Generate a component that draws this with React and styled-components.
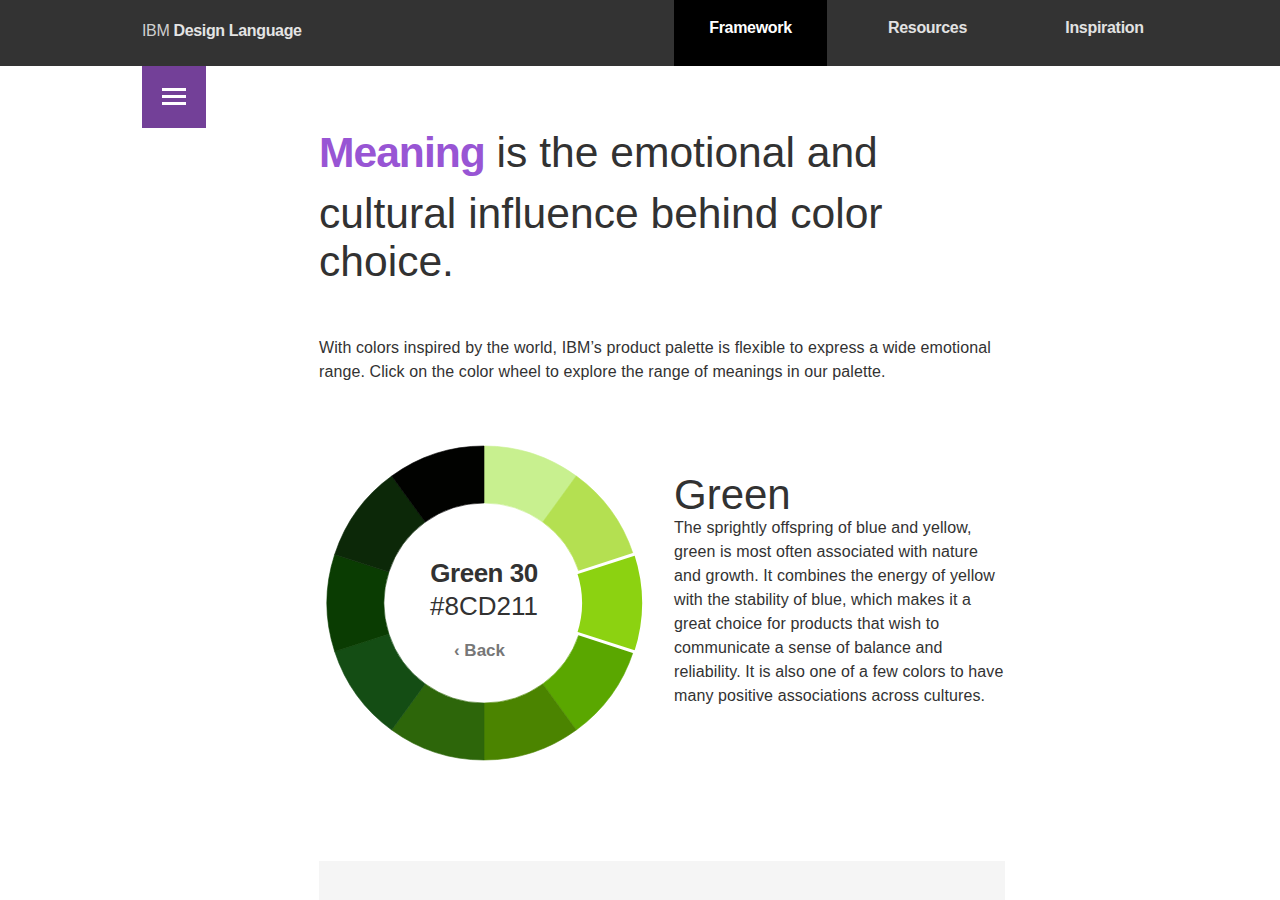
import React from "react";
import styled, { createGlobalStyle } from "styled-components";

const GlobalStyle = createGlobalStyle`
  html, body { margin: 0; padding: 0; background: #ffffff; }
  body {
    font-family: "Liberation Sans", Arial, Helvetica, sans-serif;
    color: #323232;
    overflow: hidden;
  }
  * { box-sizing: border-box; }
`;

const Page = styled.div`
  width: 1280px;
  height: 900px;
  overflow: hidden;
`;

const Header = styled.header`
  height: 66px;
  background: #333333;
  display: flex;
  align-items: flex-start;
  padding: 0 99px 0 142px;
`;

const Logo = styled.div`
  font-size: 16px;
  line-height: 18px;
  padding-top: 22px;
  color: #cfcfcf;
  letter-spacing: -0.35px;
  b { color: #e4e4e4; font-weight: 700; }
`;

const Nav = styled.nav`
  margin-left: auto;
  display: flex;
  gap: 24px;
`;

const NavItem = styled.a`
  width: 153px;
  height: 66px;
  display: flex;
  justify-content: center;
  padding-top: 18px;
  font-size: 16px;
  line-height: 20px;
  font-weight: 700;
  letter-spacing: -0.3px;
  color: ${(p) => (p.$active ? "#ffffff" : "#e2e2e2")};
  background: ${(p) => (p.$active ? "#000000" : "transparent")};
  text-decoration: none;
  cursor: pointer;
`;

const Body = styled.div`
  display: flex;
  padding-left: 142px;
`;

const Sidebar = styled.aside`
  width: 177px;
  flex: none;
`;

const MenuButton = styled.button`
  width: 64px;
  height: 62px;
  border: 0;
  padding: 0;
  background: #734098;
  display: flex;
  align-items: center;
  justify-content: center;
  cursor: pointer;
`;

const Content = styled.main`
  width: 686px;
  flex: none;
  padding-top: 49px;
`;

const Headline = styled.h1`
  margin: 0;
  font-size: 42.6px;
  line-height: 48px;
  font-weight: 400;
  color: #323232;
`;

const Accent = styled.span`
  color: #9855d4;
  font-weight: 700;
  line-height: 74px;
  letter-spacing: -1px;
`;

const Intro = styled.p`
  margin: 51px 0 0;
  font-size: 16px;
  line-height: 24px;
  letter-spacing: 0.1px;
  color: #323232;
`;

const WheelSection = styled.section`
  display: flex;
  align-items: flex-start;
  gap: 25px;
  margin-top: 54px;
`;

const WheelStack = styled.div`
  display: grid;
  width: 330px;
  height: 330px;
  flex: none;
  > * { grid-area: 1 / 1; }
`;

const WheelCenter = styled.div`
  align-self: center;
  justify-self: center;
  text-align: center;
  padding-top: 12px;
`;

const SwatchName = styled.div`
  font-size: 26px;
  line-height: 33px;
  font-weight: 700;
  letter-spacing: -0.5px;
  color: #323232;
`;

const SwatchHex = styled.div`
  font-size: 26px;
  line-height: 33px;
  color: #323232;
`;

const BackLink = styled.a`
  display: block;
  margin-top: 18px;
  margin-left: -9px;
  font-size: 17px;
  line-height: 20px;
  font-weight: 700;
  color: #777777;
  cursor: pointer;
`;

const Description = styled.div`
  width: 331px;
  padding-top: 36px;
`;

const ColorTitle = styled.h2`
  margin: 0;
  font-size: 42px;
  line-height: 42px;
  font-weight: 400;
  color: #323232;
`;

const ColorText = styled.p`
  margin: 0;
  font-size: 16px;
  line-height: 24px;
  letter-spacing: 0.1px;
  color: #323232;
`;

const GreyPanel = styled.div`
  margin-top: 93px;
  height: 120px;
  background: #f5f5f5;
`;

const greens = [
  "#c8f08f",
  "#b4e051",
  "#8cd211",
  "#5aa700",
  "#4b8400",
  "#2d660a",
  "#144d14",
  "#0a3c02",
  "#0c2808",
  "#010200",
];

const C = 165;
const pt = (r, a) => {
  const rad = (a * Math.PI) / 180;
  return `${(C + r * Math.sin(rad)).toFixed(2)} ${(C - r * Math.cos(rad)).toFixed(2)}`;
};
const seg = (a0, a1, ro, ri) =>
  `M ${pt(ro, a0)} A ${ro} ${ro} 0 0 1 ${pt(ro, a1)} L ${pt(ri, a1)} A ${ri} ${ri} 0 0 0 ${pt(ri, a0)} Z`;

function Wheel({ selected }) {
  return (
    <svg width="330" height="330" viewBox="0 0 330 330">
      {greens.map((c, i) =>
        i === selected ? null : (
          <path key={c} d={seg(i * 36, (i + 1) * 36, 157, 100)} fill={c} stroke={c} strokeWidth="0.6" />
        )
      )}
      <path
        d={seg(selected * 36, (selected + 1) * 36, 159.5, 96.5)}
        fill={greens[selected]}
        stroke="#ffffff"
        strokeWidth="3"
      />
    </svg>
  );
}

function Hamburger() {
  return (
    <svg width="24" height="18" viewBox="0 0 24 18">
      <rect x="0" y="0" width="24" height="3" fill="#ffffff" />
      <rect x="0" y="7" width="24" height="3" fill="#ffffff" />
      <rect x="0" y="14" width="24" height="3" fill="#ffffff" />
    </svg>
  );
}

export default function App() {
  return (
    <Page>
      <GlobalStyle />
      <Header>
        <Logo>
          IBM <b>Design Language</b>
        </Logo>
        <Nav>
          <NavItem $active>Framework</NavItem>
          <NavItem>Resources</NavItem>
          <NavItem>Inspiration</NavItem>
        </Nav>
      </Header>
      <Body>
        <Sidebar>
          <MenuButton aria-label="Menu">
            <Hamburger />
          </MenuButton>
        </Sidebar>
        <Content>
          <Headline>
            <Accent>Meaning</Accent> is the emotional and cultural influence behind color choice.
          </Headline>
          <Intro>
            With colors inspired by the world, IBM’s product palette is flexible to express a wide emotional
            range. Click on the color wheel to explore the range of meanings in our palette.
          </Intro>
          <WheelSection>
            <WheelStack>
              <Wheel selected={2} />
              <WheelCenter>
                <SwatchName>Green 30</SwatchName>
                <SwatchHex>#8CD211</SwatchHex>
                <BackLink>‹ Back</BackLink>
              </WheelCenter>
            </WheelStack>
            <Description>
              <ColorTitle>Green</ColorTitle>
              <ColorText>
                The sprightly offspring of blue and yellow, green is most often associated with nature and
                growth. It combines the energy of yellow with the stability of blue, which makes it a great
                choice for products that wish to communicate a sense of balance and reliability. It is also
                one of a few colors to have many positive associations across cultures.
              </ColorText>
            </Description>
          </WheelSection>
          <GreyPanel />
        </Content>
      </Body>
    </Page>
  );
}
